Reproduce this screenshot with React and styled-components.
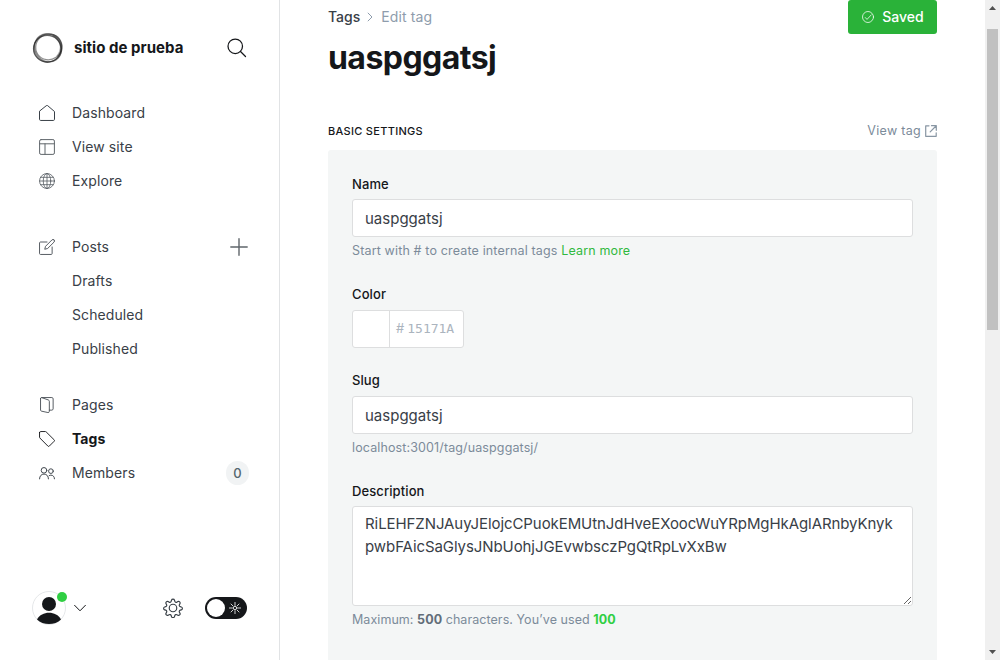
import React from "react";
import styled, { createGlobalStyle } from "styled-components";

const Global = createGlobalStyle`
  *, *::before, *::after { box-sizing: border-box; }
  html, body { margin: 0; height: 100%; overflow: hidden; }
  body {
    background: #fff;
    color: #15171a;
    font-family: Inter, "Liberation Sans", sans-serif;
    font-size: 15px;
    line-height: 1.5;
  }
`;

const Shell = styled.div`
  display: flex;
  width: 1000px;
  height: 660px;
  overflow: hidden;
`;

const Sidebar = styled.nav`
  display: flex;
  flex-direction: column;
  flex: 0 0 280px;
  border-right: 1px solid #e1e3e5;
`;

const Brand = styled.header`
  display: flex;
  align-items: center;
  height: 32px;
  margin: 32px 32px 32px;
`;

const SiteName = styled.div`
  flex: 1;
  margin-left: 10px;
  font-size: 15px;
  font-weight: 700;
  line-height: 20px;
  letter-spacing: 0.04px;
  white-space: nowrap;
`;

const IconButton = styled.button`
  display: flex;
  padding: 0;
  border: 0;
  background: none;
  color: ${(p) => p.$color || "#394047"};
`;

const NavGroup = styled.div`
  margin-bottom: ${(p) => p.$gap || 0}px;
`;

const NavItem = styled.a`
  display: flex;
  align-items: center;
  height: 34px;
  padding: 0 31px 0 39px;
  gap: 17px;
  color: ${(p) => (p.$active ? "#15171a" : "#394047")};
  font-size: 14px;
  font-weight: ${(p) => (p.$active ? 700 : 400)};
  line-height: 20px;
  letter-spacing: ${(p) => (p.$active ? 0.05 : 0.1)}px;
`;

const NavLabel = styled.span`
  flex: 1;
`;

const NavSub = styled(NavItem)`
  padding-left: 72px;
`;

const Count = styled.span`
  min-width: 23px;
  height: 24px;
  margin-right: -1px;
  border-radius: 12px;
  background: #f1f3f4;
  color: #54666d;
  font-size: 13px;
  font-weight: 500;
  line-height: 24px;
  text-align: center;
`;

const SidebarFooter = styled.footer`
  display: flex;
  align-items: center;
  height: 36px;
  margin: auto 32px 34px;
`;

const AvatarBox = styled.div`
  position: relative;
  display: flex;
  margin-right: 8px;
`;

const OnlineDot = styled.span`
  position: absolute;
  top: 1px;
  right: -1px;
  width: 10px;
  height: 10px;
  border-radius: 50%;
  background: #30cf43;
`;

const FooterTools = styled.div`
  display: flex;
  align-items: center;
  gap: 22px;
  margin-left: auto;
`;

const Toggle = styled.div`
  display: flex;
  align-items: center;
  justify-content: space-between;
  width: 42px;
  height: 22px;
  padding: 0 6px 0 2px;
  border-radius: 11px;
  background: #15171a;
`;

const Knob = styled.span`
  width: 18px;
  height: 18px;
  border-radius: 50%;
  background: #fff;
`;

const Main = styled.main`
  flex: 1;
  min-width: 0;
  padding: 0 48px;
`;

const PageHeader = styled.header`
  display: flex;
  justify-content: space-between;
  align-items: flex-start;
  height: 121px;
`;

const Crumbs = styled.div`
  display: flex;
  align-items: center;
  height: 20px;
  margin-top: 6px;
  font-size: 14px;
  font-weight: 500;
  color: #394047;
`;

const CrumbCurrent = styled.span`
  color: #8e9cac;
  font-weight: 400;
  letter-spacing: 0.12px;
`;

const Title = styled.h1`
  margin: 11px 0 0;
  font-size: 32px;
  font-weight: 700;
  line-height: 42px;
  letter-spacing: -0.55px;
`;

const SaveButton = styled.button`
  display: flex;
  align-items: center;
  justify-content: center;
  gap: 8px;
  width: 89px;
  height: 34px;
  padding: 0 0 0 1px;
  border: 0;
  border-radius: 3px;
  background: #2ab239;
  color: #fff;
  font: 500 14px/34px Inter, "Liberation Sans", sans-serif;
`;

const SectionHead = styled.div`
  display: flex;
  justify-content: space-between;
  align-items: center;
  height: 20px;
  margin-bottom: 9px;
`;

const SectionTitle = styled.h4`
  margin: 0;
  font-size: 11px;
  font-weight: 500;
  letter-spacing: 0.3px;
  text-transform: uppercase;
`;

const ViewLink = styled.a`
  display: flex;
  align-items: center;
  gap: 4px;
  color: #7c8b9a;
  font-size: 12.5px;
  letter-spacing: 0.3px;
`;

const Panel = styled.section`
  height: 560px;
  padding: 24px;
  border-radius: 3px;
  background: #f4f6f6;
`;

const Field = styled.div`
  display: flex;
  flex-direction: column;
  margin-bottom: ${(p) => p.$gap}px;
`;

const Label = styled.label`
  height: 20px;
  margin-bottom: ${(p) => p.$gap || 5}px;
  font-size: 13px;
  font-weight: 500;
  line-height: 20px;
  letter-spacing: 0.1px;
`;

const Input = styled.input`
  width: 100%;
  height: 38px;
  padding: 0 12px;
  border: 1px solid #dddedf;
  border-radius: 3px;
  background: #fff;
  color: #394047;
  font: 400 15px Inter, "Liberation Sans", sans-serif;
  outline: none;
`;

const TextArea = styled.textarea`
  display: block;
  width: 100%;
  height: 100px;
  padding: 5px 12px;
  border: 1px solid #dddedf;
  border-radius: 3px;
  background: #fff;
  color: #394047;
  font: 400 15px/23px Inter, "Liberation Sans", sans-serif;
  letter-spacing: -0.08px;
  resize: vertical;
  outline: none;
  word-break: break-all;
`;

const Hint = styled.p`
  margin: 4px 0 0;
  color: #7c8b9a;
  font-size: 12.5px;
  line-height: 20px;
  letter-spacing: ${(p) => p.$track ?? 0.12}px;
`;

const HintLink = styled.a`
  color: #30b940;
`;

const Strong = styled.b`
  font-weight: 700;
  color: ${(p) => p.$color || "#626d79"};
`;

const ColorInput = styled.div`
  display: flex;
  width: 112px;
  height: 38px;
  border: 1px solid #dddedf;
  border-radius: 3px;
  background: #fff;
`;

const Swatch = styled.span`
  width: 37px;
  border-right: 1px solid #dddedf;
`;

const ColorValue = styled.span`
  display: flex;
  align-items: center;
  gap: 3px;
  padding-left: 6px;
  color: #abb4be;
  font-size: 13px;
`;

const Hex = styled.span`
  font-family: "DejaVu Sans Mono", monospace;
`;

const ScrollTrack = styled.div`
  display: flex;
  flex-direction: column;
  align-items: center;
  flex: 0 0 15px;
  padding: 6px 0 6px;
  background: #f0f0f0;
`;

const ScrollThumb = styled.div`
  width: 11px;
  height: 301px;
  margin: 19px 0 auto;
  background: #c1c1c1;
`;

const Svg = ({ size = 16, w = 1.5, box = 24, opacity, children }) => (
  <svg width={size} height={size} viewBox={`0 0 ${box} ${box}`} fill="none" stroke="currentColor" strokeWidth={w} strokeLinecap="round" strokeLinejoin="round" opacity={opacity}>
    {children}
  </svg>
);

const HomeIcon = () => (
  <Svg><path d="M.75 9.8v11.7c0 1 .7 1.7 1.7 1.7h19.1c1 0 1.7-.7 1.7-1.7V9.8L12.9.9a1.4 1.4 0 0 0-1.8 0z" /></Svg>
);
const LayoutIcon = () => (
  <Svg opacity={0.8}><rect x=".9" y=".9" width="22.2" height="22.2" rx="2.2" /><path d="M.9 7.2h22.2M9 7.2v15.9" /></Svg>
);
const GlobeIcon = () => (
  <Svg w={1.2} opacity={0.85}><circle cx="12" cy="12" r="11.2" /><ellipse cx="12" cy="12" rx="5.6" ry="11.2" /><path d="M.8 12h22.4M2.5 6.5h19M2.5 17.5h19M12 .8v22.4" /></Svg>
);
const EditIcon = () => (
  <Svg w={1.4} opacity={0.9}>
    <path d="M12 4.5H2.2C1.4 4.5.8 5.1.8 5.9v15.900c0 .8.6 1.400 1.400 1.400h16.100c.8 0 1.400-.6 1.400-1.400V12" />
    <path d="M22.600 1.400a2.200 2.200 0 0 0-3.200 0L9.800 11l-1.200 4.400 4.400-1.200 9.600-9.600a2.200 2.200 0 0 0 0-3.200z" />
  </Svg>
);
const PagesIcon = () => (
  <Svg w={1.4} opacity={0.9}>
    <path d="M2.300 2.300v17.200c0 .8.500 1.500 1.300 1.700l9.800 2.100c1.200.2 2.100-.5 2.100-1.600V6.400c0-.9-.6-1.700-1.500-2L4 .9C3 .7 2.300 1.300 2.300 2.300z" />
    <path d="M4 .8h15.300c1.100 0 1.900.8 1.900 1.900v15.100c0 1.100-.8 1.900-1.900 1.900h-3.800" />
  </Svg>
);
const TagIcon = () => (
  <Svg w={1.4}><path d="M.8 2.300v7.100c0 .4.2.8.5 1.100l12 12.100a1.500 1.500 0 0 0 2.200 0l7.200-7.200a1.500 1.500 0 0 0 0-2.200L10.700 1.300A1.700 1.700 0 0 0 9.500.8H2.300C1.500.8.8 1.500.8 2.300z" /></Svg>
);
const MembersIcon = () => (
  <Svg opacity={0.95}>
    <circle cx="7.5" cy="8" r="4.2" /><circle cx="17.9" cy="9.2" r="3.5" />
    <path d="M.8 20.800c0-4.200 2.800-7.200 6.700-7.200s6.700 3 6.700 7.200M15.200 16c.8-.5 1.700-.8 2.600-.8 3.200 0 5.400 2.300 5.400 5.500" />
  </Svg>
);
const SearchIcon = () => (
  <Svg size={20} w={1.5}><circle cx="9.9" cy="9.9" r="8.7" /><path d="M16.200 16.200l6 6" /></Svg>
);
const PlusIcon = () => (
  <Svg size={18} box={18} w={1.4} opacity={0.8}><path d="M9 .8v16.400M.8 9h16.400" /></Svg>
);
const GearIcon = () => (
  <Svg size={20} w={1.4}>
    <circle cx="12" cy="12" r="4.5" />
    <path d="M10.200 2.700c.5-1.700 3.100-1.700 3.600 0l.4 1.300c.3 1 1.500 1.500 2.400 1l1.200-.7c1.600-.8 3.400 1 2.500 2.500l-.6 1.200c-.5 1 0 2.100 1 2.400l1.300.4c1.700.5 1.700 2.900 0 3.400l-1.300.4c-1 .3-1.500 1.500-1 2.400l.6 1.200c.9 1.500-.9 3.300-2.500 2.500l-1.200-.7c-.9-.5-2.100 0-2.400 1l-.4 1.300c-.5 1.700-3.100 1.700-3.600 0L9.800 21c-.3-1-1.500-1.500-2.400-1l-1.200.7c-1.600.8-3.400-1-2.500-2.500l.6-1.200c.5-.9 0-2.100-1-2.400L2 14.200c-1.700-.5-1.700-2.900 0-3.400l1.300-.4c1-.3 1.500-1.400 1-2.400l-.6-1.200c-.9-1.500.9-3.300 2.500-2.500l1.200.7c.9.5 2.100 0 2.400-1z" />
  </Svg>
);
const SunIcon = () => (
  <Svg size={12} box={12} w={0.9} opacity={0.9}>
    <circle cx="6" cy="6" r="1.7" />
    <path d="M6 .4v3M6 8.600v3M.4 6h3M8.600 6h3M2 2l1.900 1.900M8.100 8.100L10 10M2 10l1.900-1.900M8.100 3.900L10 2" />
  </Svg>
);
const CheckIcon = () => (
  <Svg size={12} w={1.5}><circle cx="12" cy="12" r="11" /><path d="M6.500 13l3.500 3.800 8.500-9" /></Svg>
);
const ExternalIcon = () => (
  <Svg size={12} box={12} w={1.2} opacity={0.9}>
    <path d="M4 .8H.7v10.500h10.500V7.800M6.500.7h4.800v4.600M11 1L5.200 6.800" />
  </Svg>
);
const ChevronDown = () => (
  <Svg size={12} box={12} w={1}><path d="M.6 3.300L6 8.800l5.400-5.500" /></Svg>
);
const CrumbArrow = styled.svg`
  margin: 1px 8px 0 7px;
`;
const Logo = () => (
  <svg width="32" height="32" viewBox="0 0 32 32" fill="none" stroke="#222">
    <ellipse cx="15.2" cy="16.700" rx="13.700" ry="13.400" strokeWidth="1.200" opacity=".7" />
    <ellipse cx="16.800" cy="14.900" rx="13.300" ry="12.700" strokeWidth="1.200" opacity=".5" transform="rotate(-35 16.800 14.900)" />
    <ellipse cx="16" cy="15.900" rx="14.400" ry="13" strokeWidth="1.300" opacity=".5" transform="rotate(55 16 15.900)" />
    <ellipse cx="16" cy="16" rx="13.900" ry="14.200" strokeWidth="1.200" opacity=".5" transform="rotate(20 16 16)" />
    <path d="M21 3c5 2.200 8 7 7.900 12-.1 3.500-1.500 7-3.700 9.500" strokeWidth="2.200" opacity=".35" />
  </svg>
);
const Avatar = () => (
  <svg width="34" height="34" viewBox="0 0 34 34">
    <circle cx="17" cy="17" r="16.5" fill="#fff" stroke="#e5e7e9" />
    <circle cx="17" cy="13" r="7" fill="#15171a" />
    <path d="M5 28.500C7.500 24 12 21.800 17 21.800S26.500 24 29 28.500C26 31.500 21.500 33 17 33S8 31.500 5 28.500z" fill="#15171a" />
  </svg>
);

export default function App() {
  return (
    <Shell>
      <Global />
      <Sidebar>
        <Brand>
          <Logo />
          <SiteName>sitio de prueba</SiteName>
          <IconButton $color="#15171a"><SearchIcon /></IconButton>
        </Brand>
        <NavGroup $gap={32}>
          <NavItem><HomeIcon /><NavLabel>Dashboard</NavLabel></NavItem>
          <NavItem><LayoutIcon /><NavLabel>View site</NavLabel></NavItem>
          <NavItem><GlobeIcon /><NavLabel>Explore</NavLabel></NavItem>
        </NavGroup>
        <NavGroup $gap={22}>
          <NavItem><EditIcon /><NavLabel>Posts</NavLabel><PlusIcon /></NavItem>
          <NavSub>Drafts</NavSub>
          <NavSub>Scheduled</NavSub>
          <NavSub>Published</NavSub>
        </NavGroup>
        <NavGroup>
          <NavItem><PagesIcon /><NavLabel>Pages</NavLabel></NavItem>
          <NavItem $active><TagIcon /><NavLabel>Tags</NavLabel></NavItem>
          <NavItem><MembersIcon /><NavLabel>Members</NavLabel><Count>0</Count></NavItem>
        </NavGroup>
        <SidebarFooter>
          <AvatarBox><Avatar /><OnlineDot /></AvatarBox>
          <ChevronDown />
          <FooterTools>
            <IconButton><GearIcon /></IconButton>
            <Toggle><Knob /><IconButton $color="#fff"><SunIcon /></IconButton></Toggle>
          </FooterTools>
        </SidebarFooter>
      </Sidebar>
      <Main>
        <PageHeader>
          <div>
            <Crumbs>
              Tags
              <CrumbArrow width="6" height="10" viewBox="0 0 6 10" fill="none" stroke="#8e9cac">
                <path d="M.8.8L5 5 .8 9.2" />
              </CrumbArrow>
              <CrumbCurrent>Edit tag</CrumbCurrent>
            </Crumbs>
            <Title>uaspggatsj</Title>
          </div>
          <SaveButton><CheckIcon />Saved</SaveButton>
        </PageHeader>
        <SectionHead>
          <SectionTitle>Basic settings</SectionTitle>
          <ViewLink>View tag <ExternalIcon /></ViewLink>
        </SectionHead>
        <Panel>
          <Field $gap={23}>
            <Label>Name</Label>
            <Input defaultValue="uaspggatsj" />
            <Hint $track={0.15}>Start with # to create internal tags <HintLink>Learn more</HintLink></Hint>
          </Field>
          <Field $gap={22}>
            <Label $gap={6}>Color</Label>
            <ColorInput>
              <Swatch />
              <ColorValue>#<Hex>15171A</Hex></ColorValue>
            </ColorInput>
          </Field>
          <Field $gap={23}>
            <Label $gap={6}>Slug</Label>
            <Input defaultValue="uaspggatsj" />
            <Hint>localhost:3001/tag/uaspggatsj/</Hint>
          </Field>
          <Field $gap={24}>
            <Label>Description</Label>
            <TextArea spellCheck={false} defaultValue="RiLEHFZNJAuyJElojcCPuokEMUtnJdHveEXoocWuYRpMgHkAglARnbyKnykpwbFAicSaGlysJNbUohjJGEvwbsczPgQtRpLvXxBw" />
            <Hint $track={0.06}>Maximum: <Strong>500</Strong> characters. You’ve used <Strong $color="#30cf43">100</Strong></Hint>
          </Field>
        </Panel>
      </Main>
      <ScrollTrack>
        <svg width="7" height="4" viewBox="0 0 7 4"><path d="M3.500 0L7 4H0z" fill="#505050" /></svg>
        <ScrollThumb />
        <svg width="7" height="4" viewBox="0 0 7 4"><path d="M0 0H7L3.500 4z" fill="#505050" /></svg>
      </ScrollTrack>
    </Shell>
  );
}
